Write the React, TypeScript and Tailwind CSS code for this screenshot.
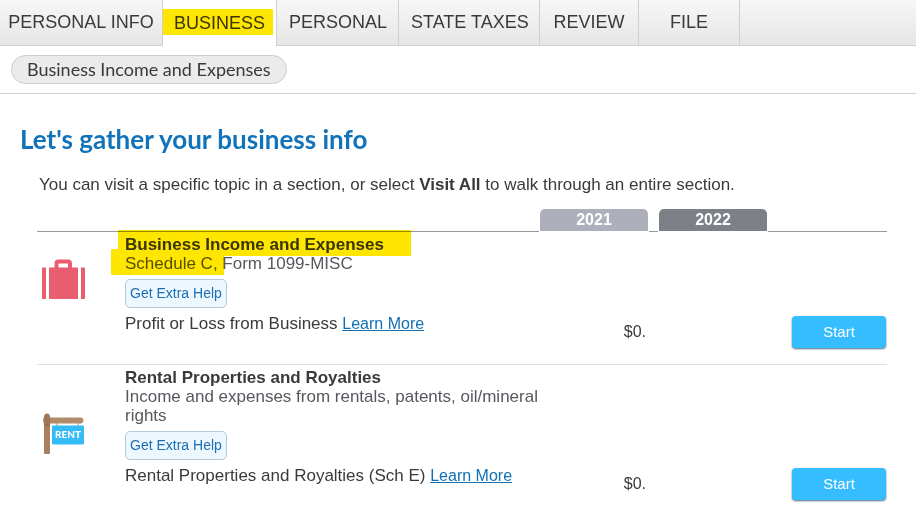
import type { ReactNode } from "react";

const tabs = [
  { label: "PERSONAL INFO", className: "w-[163px] px-[7px]" },
  { label: "BUSINESS", className: "w-[114px] px-[11px]", active: true },
  { label: "PERSONAL", className: "w-[122px] px-3" },
  { label: "STATE TAXES", className: "w-[141px] px-3" },
  { label: "REVIEW", className: "w-[99px] px-3" },
  { label: "FILE", className: "w-[101px] px-3" },
];

function SuitcaseIcon() {
  return (
    <svg width="44" height="41" viewBox="0 0 44 41" aria-hidden="true">
      <g fill="#e95d70">
        <path d="M1 8.5h3V40H1q-1 0-1-1V9.500q0-1 1-1z" />
        <path d="M39 8.500h3q1 0 1 1V39q0 1-1 1h-3z" />
        <path d="M7 8.500h29V40H7z" />
      </g>
      <path
        d="M14.500 10V4.500Q14.500 2.500 16.500 2.500h9.500q2 0 2 2V10"
        fill="none"
        stroke="#e95d70"
        strokeWidth="4"
      />
    </svg>
  );
}

function RentSignIcon() {
  return (
    <svg width="42" height="42" viewBox="0 0 42 42" role="img" aria-label="Rent">
      <path d="M14 10v3M35 10v3" stroke="#c3b3a6" strokeWidth="1.500" />
      <path d="M1 9h6v31q0 1-1 1H2q-1 0-1-1z" fill="#a8805f" />
      <path d="M1 9h6v4H1z" fill="#97704f" />
      <path d="M2 4.500h36.500q2 1 2 3t-2 3H2z" fill="#b28b6b" />
      <path d="M1 4Q1 .500 4 .500T7 4l.500 3.500L7 11H1L0 7.500z" fill="#a07857" />
      <rect x="9" y="12.500" width="32" height="19" rx="1" fill="#35bbf5" />
      <text
        x="25"
        y="25"
        textAnchor="middle"
        fill="#fff"
        fontFamily="Lato, sans-serif"
        fontWeight="900"
        fontSize="10"
      >
        RENT
      </text>
    </svg>
  );
}

type Topic = {
  title: string;
  forms: string;
  detail: string;
  amount: string;
  icon: ReactNode;
  iconClass: string;
  highlighted?: boolean;
};

const topics: Topic[] = [
  {
    title: "Business Income and Expenses",
    forms: "Schedule C, Form 1099-MISC",
    detail: "Profit or Loss from Business",
    amount: "$0.",
    icon: <SuitcaseIcon />,
    iconClass: "pt-[27px] pl-[5px]",
    highlighted: true,
  },
  {
    title: "Rental Properties and Royalties",
    forms: "Income and expenses from rentals, patents, oil/mineral rights",
    detail: "Rental Properties and Royalties (Sch E)",
    amount: "$0.",
    icon: <RentSignIcon />,
    iconClass: "pt-12 pl-[6px]",
  },
];

function TopicRow({ topic, last }: { topic: Topic; last: boolean }) {
  const line = last ? "" : "border-b border-[#dedfe1]";
  return (
    <tr>
      <td className={`align-top ${topic.iconClass} ${line}`}>{topic.icon}</td>
      <td className={`pt-[3px] pb-[31px] align-top text-[17px] ${line}`}>
        <div className="relative">
          <h2 className="leading-[19px] font-bold">{topic.title}</h2>
          <p className="leading-[19px] text-[#55585d]">{topic.forms}</p>
          {topic.highlighted && (
            <svg
              className="pointer-events-none absolute -top-[5px] -left-[14px] mix-blend-multiply"
              width="300"
              height="45"
              aria-hidden="true"
            >
              <path d="M7 0h293v26H113v19H0V19h7z" fill="#ffe600" />
            </svg>
          )}
        </div>
        <button className="mt-[6px] flex h-[29px] items-center rounded-[5px] border border-[#b5cbdb] bg-[#edf8fe] px-1 pb-px text-sm text-[#1a6fb5]">
          Get Extra Help
        </button>
        <p className="mt-[6px] leading-[19px]">
          {topic.detail}{" "}
          <a href="#learn-more" className="text-base leading-[19px] text-[#1270b5] underline">
            Learn More
          </a>
        </p>
      </td>
      <td className={`pr-[3px] pb-[22px] text-right align-bottom leading-5 ${line}`}>
        {topic.amount}
      </td>
      <td className={line} />
      <td className={line} />
      <td className={`pr-px pb-4 align-bottom ${line}`}>
        <button className="ml-auto block h-8 w-[94px] rounded bg-[#35bdff] text-[15px] text-white shadow-[0_1px_2px_#4d6d80]">
          Start
        </button>
      </td>
    </tr>
  );
}

export default function App() {
  return (
    <div className="bg-white font-['Liberation_Sans',Arial,sans-serif] text-base text-[#393a3d]">
      <nav className="flex h-[46px] bg-linear-to-b from-[#f7f7f7] via-[#eeeeee] to-[#e6e6e6] text-lg">
        {tabs.map((tab) => (
          <button
            key={tab.label}
            aria-current={tab.active ? "page" : undefined}
            className={`relative shrink-0 border-r border-[#cfcfcf] whitespace-nowrap ${tab.className} ${
              tab.active ? "bg-white" : "border-b pb-[2px]"
            }`}
          >
            {tab.label}
            {tab.active && (
              <span className="absolute top-[9px] right-[3px] left-0 h-[26px] bg-[#ffe600] mix-blend-multiply" />
            )}
          </button>
        ))}
        <div className="flex-1 border-b border-[#cfcfcf]" />
      </nav>

      <div className="flex h-12 items-center border-b border-[#d0d0d0] px-[11px]">
        <button className="h-[29px] rounded-full border border-[#cccccc] bg-[#ebebeb] px-[15px] pb-px font-['Lato',sans-serif] text-lg leading-6">
          Business Income and Expenses
        </button>
      </div>

      <main className="pt-[29px] pr-[29px] pl-5">
        <h1 className="font-['Lato',sans-serif] text-[26px] leading-8 font-bold text-[#1173b9]">
          Let's gather your business info
        </h1>
        <p className="mt-5 pl-[19px] text-[17px] leading-5">
          You can visit a specific topic in a section, or select <strong>Visit All</strong> to walk
          through an entire section.
        </p>

        <div className="mt-[14px] pl-[17px]">
          <table className="w-full table-fixed border-separate border-spacing-0">
            <colgroup>
              <col className="w-[88px]" />
              <col />
              <col className="w-[110px]" />
              <col className="w-[9px]" />
              <col className="w-[110px]" />
              <col className="w-[119px]" />
            </colgroup>
            <thead>
              <tr className="h-[23px] text-white">
                <td className="border-b border-[#96989d]" />
                <td className="border-b border-[#96989d]" />
                <th scope="col" className="px-px pb-px">
                  <div className="h-[22px] rounded-t-[5px] bg-[#adb0ba] leading-[22px]">2021</div>
                </th>
                <td className="border-b border-[#96989d]" />
                <th scope="col" className="px-px pb-px">
                  <div className="h-[22px] rounded-t-[5px] bg-[#7e8088] leading-[22px]">2022</div>
                </th>
                <td className="border-b border-[#96989d]" />
              </tr>
            </thead>
            <tbody>
              {topics.map((topic, i) => (
                <TopicRow key={topic.title} topic={topic} last={i === topics.length - 1} />
              ))}
            </tbody>
          </table>
        </div>
      </main>
    </div>
  );
}
